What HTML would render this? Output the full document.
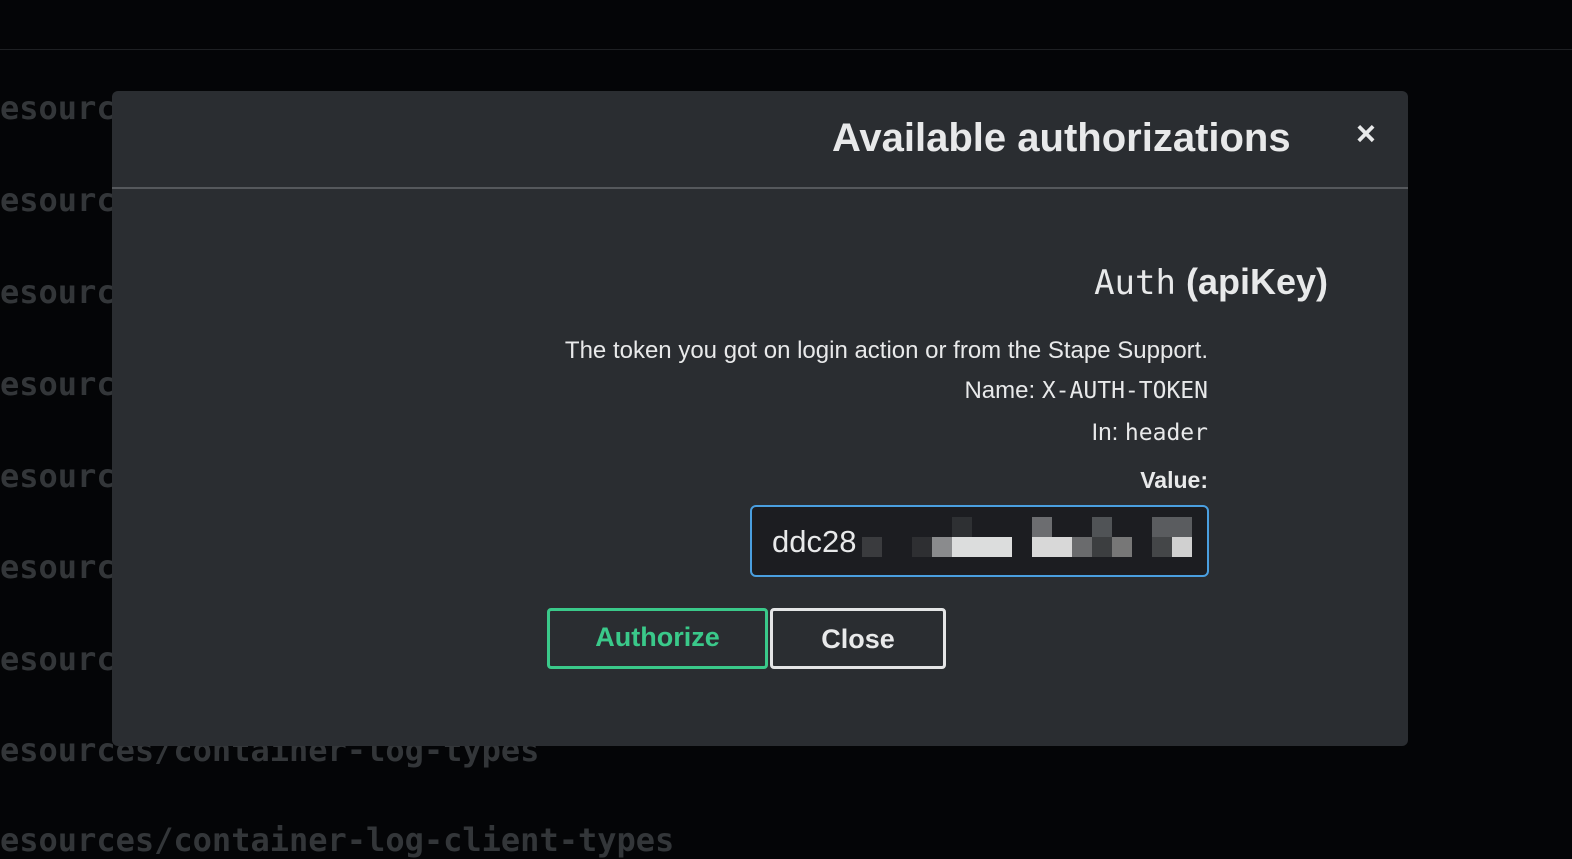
<!DOCTYPE html>
<html><head><style>
body{margin:0;width:1572px;height:856px;background:#040507;overflow:hidden;position:relative;font-family:"Liberation Sans",sans-serif}
.bg{position:absolute;left:0;font-family:"DejaVu Sans Mono","Liberation Mono",monospace;font-weight:bold;font-size:32px;color:#333639;white-space:nowrap}
.hl{position:absolute;left:0;right:0;top:49px;height:1px;background:#1e2023}
.modal{position:absolute;left:112px;top:91px;width:1296px;height:655px;background:#2a2d31;border-radius:6px}
.t{position:absolute;color:#e8e9ea;white-space:nowrap}
.px{position:absolute}
</style></head><body>
<div class="hl"></div>
<div class="bg" style="top:89px">esourc</div>
<div class="bg" style="top:181px">esourc</div>
<div class="bg" style="top:273px">esourc</div>
<div class="bg" style="top:365px">esourc</div>
<div class="bg" style="top:457px">esourc</div>
<div class="bg" style="top:548px">esourc</div>
<div class="bg" style="top:640px">esourc</div>
<div class="bg" style="top:731px">esources/container-log-types</div>
<div class="bg" style="top:821px">esources/container-log-client-types</div>
<div class="modal">
 <div style="position:absolute;left:0;right:0;top:96px;height:2px;background:#55585c"></div>
 <div class="t" style="left:720px;top:25px;font-size:40px;font-weight:bold">Available authorizations</div>
 <div class="t" style="left:1244px;top:24px;font-size:34px;font-weight:bold">×</div>
 <div class="t" style="right:80px;top:170px;font-size:36px"><span style="font-family:'DejaVu Sans Mono',monospace;font-weight:normal;font-size:34px">Auth</span> <b>(apiKey)</b></div>
 <div class="t" style="right:200px;top:246px;font-size:24px">The token you got on login action or from the Stape Support.</div>
 <div class="t" style="right:200px;top:286px;font-size:24px">Name: <span style="font-family:'DejaVu Sans Mono',monospace;font-size:23px">X-AUTH-TOKEN</span></div>
 <div class="t" style="right:200px;top:328px;font-size:24px">In: <span style="font-family:'DejaVu Sans Mono',monospace;font-size:23px">header</span></div>
 <div class="t" style="right:200px;top:376px;font-size:23px;font-weight:bold">Value:</div>
 <div style="position:absolute;left:638px;top:414px;width:455px;height:68px;background:#1c1d21;border:2px solid #4a9fe0;border-radius:6px;overflow:hidden">
  <div class="t" style="left:20px;top:17px;font-size:31px">ddc28</div>
  <div class="px" style="left:110px;top:30px;width:20px;height:20px;background:#3a3b3e"></div>
  <div class="px" style="left:160px;top:30px;width:20px;height:20px;background:#2e2f32"></div>
  <div class="px" style="left:180px;top:30px;width:20px;height:20px;background:#8a8b8d"></div>
  <div class="px" style="left:200px;top:10px;width:20px;height:20px;background:#2e3033"></div>
  <div class="px" style="left:200px;top:30px;width:60px;height:20px;background:#dcdddd"></div>
  <div class="px" style="left:280px;top:10px;width:20px;height:20px;background:#6c6d70"></div>
  <div class="px" style="left:280px;top:30px;width:40px;height:20px;background:#d8d8d8"></div>
  <div class="px" style="left:320px;top:30px;width:20px;height:20px;background:#6a6b6d"></div>
  <div class="px" style="left:340px;top:10px;width:20px;height:20px;background:#505356"></div>
  <div class="px" style="left:340px;top:30px;width:20px;height:20px;background:#3c3e40"></div>
  <div class="px" style="left:360px;top:30px;width:20px;height:20px;background:#777"></div>
  <div class="px" style="left:400px;top:10px;width:40px;height:20px;background:#5a5c5f"></div>
  <div class="px" style="left:400px;top:30px;width:20px;height:20px;background:#444648"></div>
  <div class="px" style="left:420px;top:30px;width:20px;height:20px;background:#d0d0d0"></div>
 </div>
 <div style="position:absolute;left:435px;top:517px;width:215px;height:55px;border:3px solid #3ac98a;border-radius:4px;color:#3ac98a;font-size:27px;font-weight:bold;text-align:center;line-height:53px">Authorize</div>
 <div style="position:absolute;left:658px;top:517px;width:170px;height:55px;border:3px solid #e4e5e6;border-radius:4px;color:#e8e9ea;font-size:27px;font-weight:bold;text-align:center;line-height:57px">Close</div>
</div>
</body></html>
